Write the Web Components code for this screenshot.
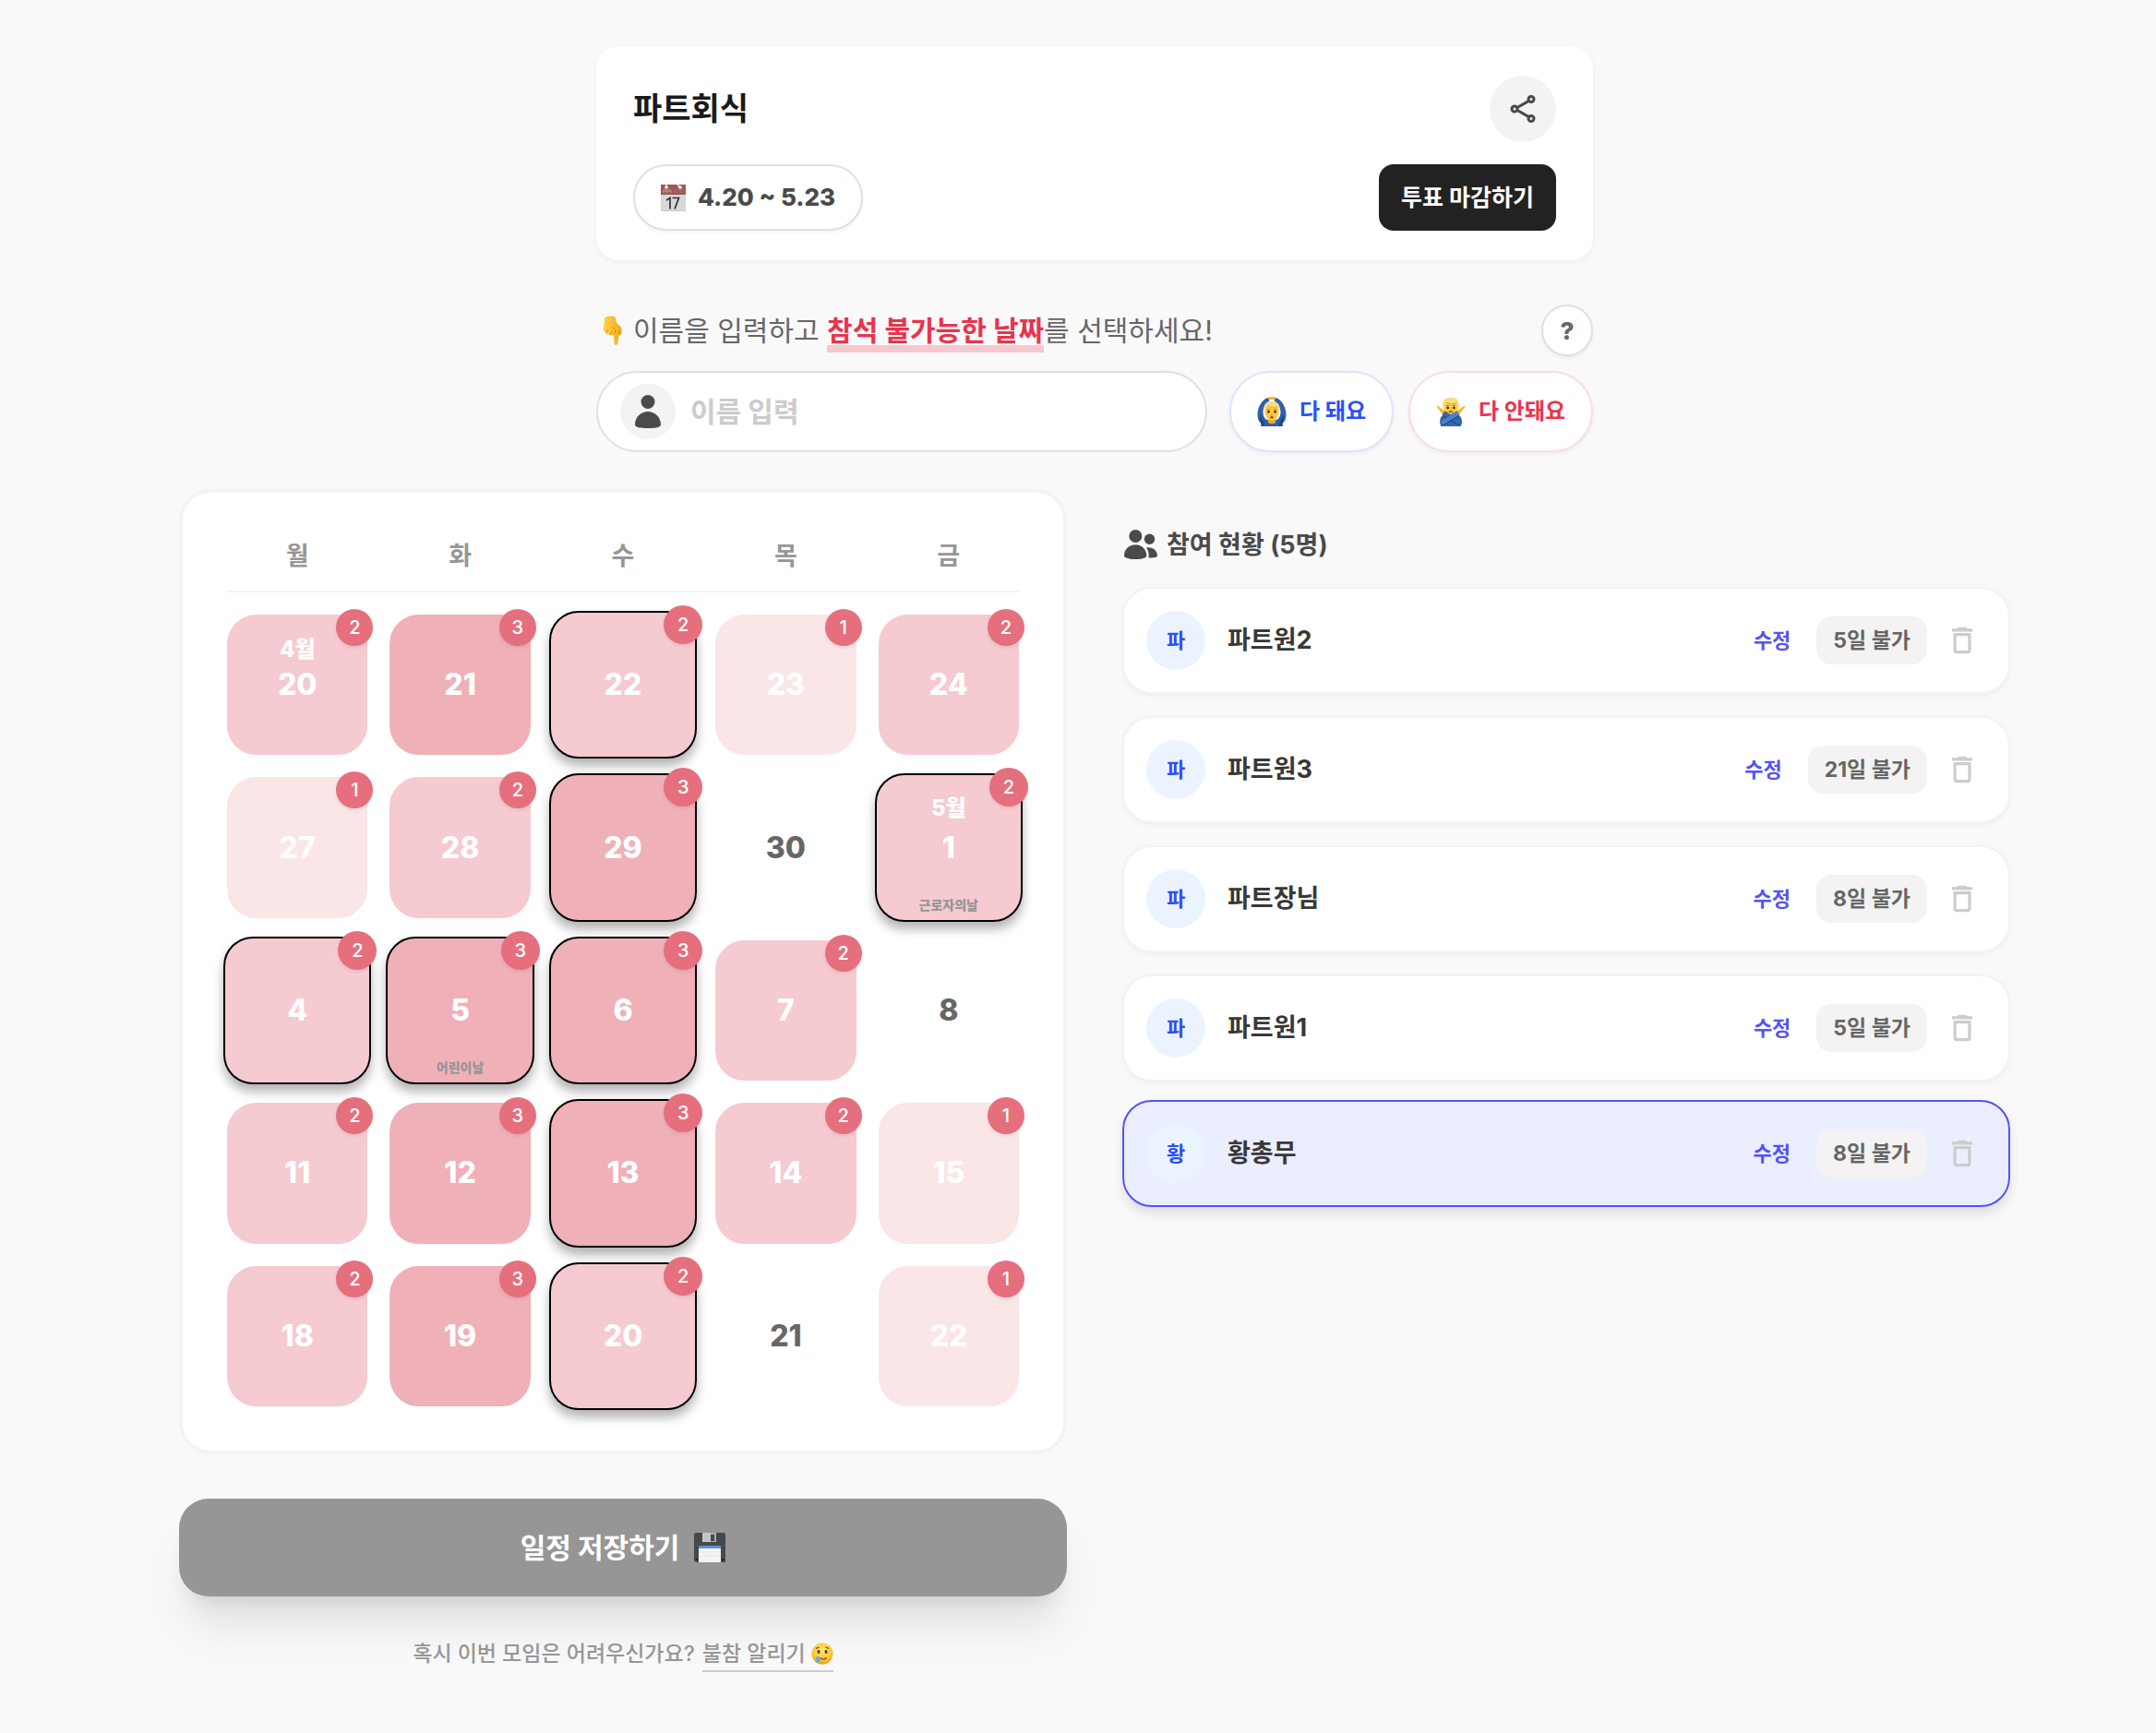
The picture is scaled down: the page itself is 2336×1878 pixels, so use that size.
<!DOCTYPE html>
<html lang="ko">
<head>
<meta charset="utf-8">
<meta name="viewport" content="width=device-width, initial-scale=1">
<title>파트회식</title>
<style>
  body {
    margin: 0;
    background: #f9f9f9;
    font-family: Inter, "Noto Sans CJK KR", sans-serif;
  }
</style>
</head>
<body>
<vote-page></vote-page>

<script>
const ICONS = {
    share: ['0 0 24 24', `
        <g fill="none" stroke="currentColor" stroke-width="2">
          <path d="M8 11l8-4.6M8 13l8 4.6"/>
          <circle cx="6" cy="12" r="2"/><circle cx="18" cy="5" r="2"/><circle cx="18" cy="19" r="2"/>
        </g>`],
    person: ['0 0 36 36', `
        <g fill="currentColor"><circle cx="18" cy="7.5" r="7.5"/>
        <path d="M18 18c8 0 14 6.500 14 14 0 1.300-.6 2-1.800 2.400C26.500 36.500 9.500 36.500 5.800 34.400 4.600 34 4 33.300 4 32c0-7.500 6-14 14-14z"/></g>`],
    people: ['0 0 36 36', `
        <g fill="currentColor"><circle cx="12.300" cy="8" r="7"/><circle cx="27.500" cy="11.300" r="5.700"/>
        <path d="M12.300 17.300c7 0 12 5.200 12 12 0 1-.5 1.600-1.400 1.900-5 2.500-16 2.500-21.200 0C.6 30.900 0 30.300 0 29.300c0-6.800 5.200-12 12.300-12z"/>
        <path d="M24 20.600c6.500-1.500 12 3.100 12 8.400 0 2-3.500 2.600-9.500 2.600.7-4.200-.2-7.800-2.500-11z"/></g>`],
    trash: ['0 0 24 24', `
        <path fill="currentColor" d="M6 19c0 1.100.9 2 2 2h8c1.100 0 2-.9 2-2V7H6v12zM8 9h8v10H8V9zm7.500-5l-1-1h-5l-1 1H5v2h14V4h-3.500z"/>`],
    calendar: ['0 0 28 30', `
        <path fill="#d8d8d8" d="M0 10h27v20H0z"/><path fill="#9b5a57" d="M0 1h27v11H0z"/>
        <path fill="#c9c9c9" d="M0 29h27v1H0z"/>
        <circle cx="6" cy="4" r="1.800" fill="#fff"/><circle cx="21" cy="4" r="1.800" fill="#fff"/>
        <path d="M6 4V0M21 4l-3-3" stroke="#fff" stroke-width="1.200"/>
        <path d="M14 8h11" stroke="#a0625f" stroke-width="4"/>
        <path d="M2 9h1.500V6M5.500 6v3H8V6M10 6v3h2" fill="none" stroke="#d9b5b3" stroke-width=".8"/>
        <path d="M6 18l4-2.500v12M12.500 15.500h7l-4.500 12" fill="none" stroke="#333" stroke-width="1.700"/>`],
    point: ['0 0 22 32', `
        <defs><linearGradient id="g" x2="1"><stop stop-color="#ffd54a"/><stop offset="1" stop-color="#f2a81d"/></linearGradient></defs>
        <path fill="url(#g)" d="M2 3C3 0 13-.5 14 2c.3 3 .5 5 2.500 7.500C20 12 21 14 20.500 17c0 3-1 4.500-3 4.500-.3 2-.8 6-1.200 8.500-.3 2.500-3.600 2.500-3.800 0L12 20.500c-2 1.700-4 1.200-5-.3-2 .6-3.600-.4-4.200-2.200C1 17.500.3 15.500.8 13c.2-4 1.700-6.500 1.200-10z"/>
        <path fill="none" stroke="#d88913" stroke-width="1" d="M3 18c1.500 0 2.500-1 2.600-3M7 20c1.800-.3 2.700-1.500 2.800-3.500M12 20.500c1.500-1 2-2.500 1.500-5l-3-3.500M17.500 21c1-1.500 1-3 .5-4.500"/>`],
    ok: ['0 0 32 32', `
        <path fill="none" stroke="#f0ae2a" stroke-width="2.600" stroke-linecap="round" d="M11.500 3.200C13 .8 19 .8 20.500 3.200"/>
        <path fill="#2e5fa8" d="M11.500 1C5 3 .5 12 .5 19c0 5 1.500 8 4 10v3h23v-3c2.500-2 4-5 4-10 0-7-4.500-16-11-18l-2 3.500C23.500 7 25 11 25.500 16c0 5-2 8-4.500 9H11c-2.500-1-4.500-4-4.500-9 .5-5 2-9 7-11.500z"/>
        <path fill="#22477f" d="M4.500 29C3 26 3 22 4 19c.5 4 2 7 4 9v4H4.500zM27.500 29c1.500-3 1.500-7 .5-10-.5 4-2 7-4 9v4h3.500z"/>
        <path fill="#e9a92b" d="M12 24h8v4q-4 2.500-8 0z"/>
        <path fill="#fbc93f" d="M8.300 14c0-6 3.200-8.500 7.700-8.500s7.700 2.500 7.700 8.500c0 7-3 12-7.700 12s-7.700-5-7.700-12z"/>
        <path fill="#f8dc85" d="M7.800 14.500C7 8 10 5 16 5s9 3 8.200 9.500c-1-1-1.600-2.300-1.900-3.800-3 .8-8 .6-11.200-.9-.8 2-1.800 3.600-3.300 4.700z"/>
        <path fill="none" stroke="#dba43a" stroke-width=".8" d="M11 10c3.200 1.600 8.200 1.700 11.300.8"/>
        <path d="M11 13.800h2.800M18.200 13.800H21" stroke="#9a6818" stroke-width=".9"/>
        <circle cx="12.500" cy="16.300" r="1.300" fill="#37241a"/><circle cx="19.500" cy="16.300" r="1.300" fill="#37241a"/>
        <path d="M14.800 19.300q1.200.8 2.400 0" fill="none" stroke="#cf8b1d"/><ellipse cx="16" cy="22.300" rx="1.900" ry="1" fill="#6b3517"/>`],
    no: ['0 0 32 32', `
        <path fill="#f5b52d" d="M.5 10.500q.5-1.500 2-.3L10 16l-2.500 4zM31.500 10.500q-.5-1.500-2-.3L22 16l2.500 4z"/>
        <path fill="#3365b0" d="M5 22c2.500-3.500 19.500-3.500 22 0l1 5-1 5H5l-1-5z"/>
        <ellipse cx="16" cy="10.500" rx="8" ry="9" fill="#fbc93f"/>
        <path fill="#f8dc85" d="M7.600 11C6 4 9.500.5 16 .5S26 4 24.400 11c-1-1-1.500-2.500-1.900-4.200-3.500.9-8.500.6-11.500-.9-.8 2.200-1.800 3.800-3.400 5.100z"/>
        <path fill="none" stroke="#dba43a" stroke-width=".9" d="M11 6c3.200 1.700 8 1.900 11.400 1"/>
        <path d="M11.300 9.600h2.600M18.100 9.600h2.600" stroke="#9a6818" stroke-width=".9"/>
        <circle cx="12.700" cy="12" r="1.300" fill="#37241a"/><circle cx="19.300" cy="12" r="1.300" fill="#37241a"/>
        <path d="M14 16.500q2-1.300 4 0" stroke="#6b3517" stroke-width="1.200" fill="none"/>
        <path d="M8 18l18 11" stroke="#22477f" stroke-width="6"/><path d="M8 17.500l18 11" stroke="#3567b3" stroke-width="4.800"/>
        <path d="M24 18L6 29" stroke="#22477f" stroke-width="6"/><path d="M24 17.500l-18 11" stroke="#4a80cc" stroke-width="4.800"/>`],
    floppy: ['0 0 34 32', `
        <path fill="#46484c" d="M0 2q0-2 2-2h30q2 0 2 2v30H2l-2-2z"/>
        <path fill="#a9abae" d="M9 0h15v10H9z"/><path fill="#c4c5c8" d="M9 0h9v10H9z"/><path fill="#46484c" d="M18 2h4v7h-4z"/>
        <path fill="#f4f4f5" d="M5 14h24v18H5z"/><path fill="#5d8fd0" d="M5 14h24v3H5z"/>
        <path stroke="#e4e4e7" d="M5 21h24M5 25h24"/><path fill="#232427" d="M1.500 28H4v2H1.500zM30 28h2.500v2H30z"/>`],
    tear: ['0 0 24 24', `
        <defs><radialGradient id="f" cx=".5" cy=".35" r=".65"><stop stop-color="#ffe96a"/><stop offset=".7" stop-color="#fbc635"/><stop offset="1" stop-color="#e99a1b"/></radialGradient></defs>
        <circle cx="12" cy="12" r="11.500" fill="url(#f)"/>
        <ellipse cx="8" cy="10" rx="1.500" ry="2.100" fill="#5c3a12"/><ellipse cx="16" cy="10" rx="1.500" ry="2.100" fill="#5c3a12"/>
        <path d="M5 6.500l3.500-1.500M19 6.500L15.500 5M9.500 16.500c2 1.800 5 1.800 7 0" fill="none" stroke="#6b4413" stroke-width="1.300"/>
        <path fill="#4fa9ee" d="M7 14c1.500 2.500 2.500 3.700 2.500 5.200 0 3.200-5 3.200-5 0 0-1.500 1-2.700 2.500-5.200z"/>
        <path fill="#bfe2fb" d="M6.700 17c-1.200 1.500-1.200 2.300-.5 3z"/>`]
};

class UiIcon extends HTMLElement {
    constructor() {
        super();
        const [box, body] = ICONS[this.getAttribute('name')];
        this.attachShadow({ mode: 'open' }).innerHTML = `
          <style>
            :host { display: inline-flex; flex: none; width: 32px; height: 32px; }
            svg { width: 100%; height: 100%; display: block; }
          </style>
          <svg viewBox="${box}" aria-hidden="true">${body}</svg>
        `;
    }
}

class VoteHeader extends HTMLElement {
    constructor() {
        super();
        this.attachShadow({ mode: 'open' }).innerHTML = `
          <style>
            :host {
              display: flex;
              flex-direction: column;
              gap: 24px;
              padding: 32px 40px;
              background: #fff;
              border-radius: 24px;
              box-shadow: 0 2px 6px rgba(0, 0, 0, .05);
            }
            .row { display: flex; align-items: center; justify-content: space-between; }
            h1 { margin: 0; font-size: 34px; line-height: 52px; font-weight: 700; color: #1a1a1a; }
            button { border: 0; padding: 0; font: inherit; cursor: pointer; }
            .share {
              display: grid;
              place-items: center;
              width: 72px;
              height: 72px;
              border-radius: 50%;
              background: #f3f3f3;
              color: #4a4a4a;
            }
            .share ui-icon { width: 36px; height: 36px; }
            .period {
              display: flex;
              align-items: center;
              gap: 12px;
              height: 72px;
              padding: 0 28px;
              box-sizing: border-box;
              border: 2px solid #e0e0e0;
              border-radius: 36px;
              box-shadow: 0 2px 4px rgba(0, 0, 0, .06);
              background: #fff;
              font-size: 26px;
              line-height: 40px;
              font-weight: 800;
              color: #4a4a4a;
            }
            .period ui-icon { width: 28px; height: 30px; }
            .close {
              padding: 0 24px;
              border-radius: 16px;
              background: #222;
              color: #fff;
              font-size: 25px;
              line-height: 72px;
              font-weight: 700;
            }
          </style>
          <div class="row">
            <h1><slot></slot></h1>
            <button class="share" aria-label="공유"><ui-icon name="share"></ui-icon></button>
          </div>
          <div class="row">
            <button class="period"><ui-icon name="calendar"></ui-icon><slot name="period"></slot></button>
            <button class="close">투표 마감하기</button>
          </div>
        `;
    }
}

class NameForm extends HTMLElement {
    constructor() {
        super();
        this.attachShadow({ mode: 'open' }).innerHTML = `
          <style>
            :host { display: flex; flex-direction: column; gap: 16px; }
            .row { display: flex; align-items: center; gap: 16px; }
            .guide { justify-content: space-between; }
            label { display: flex; align-items: center; gap: 10px; font-size: 30px; line-height: 48px; color: #666; }
            label ui-icon { width: 24px; margin-left: 6px; }
            strong { color: #e8344e; font-weight: 700; box-shadow: 0 8px #f6c8ce; line-height: 32px; display: inline-block; }
            button { font: inherit; font-weight: 700; cursor: pointer; background: #fff; box-sizing: border-box; box-shadow: 0 2px 4px rgba(0, 0, 0, .06); }
            .help { width: 56px; height: 56px; padding: 0; border: 2px solid #e0e0e0; border-radius: 50%; font-size: 26px; font-weight: 800; color: #666; }
            .field {
              display: flex;
              flex: 1;
              align-items: center;
              gap: 16px;
              height: 88px;
              margin-right: 8px;
              padding: 0 24px;
              box-sizing: border-box;
              border: 2px solid #e0e0e0;
              border-radius: 44px;
              background: #fff;
            }
            .avatar { display: grid; place-items: center; width: 60px; height: 60px; border-radius: 50%; background: #f3f3f3; color: #4a4a4a; }
            .avatar ui-icon { width: 36px; height: 36px; }
            input { flex: 1; min-width: 0; padding: 0; border: 0; outline: 0; background: none; font: inherit; font-size: 30px; font-weight: 700; color: #333; }
            input::placeholder { color: #ccc; }
            .all { display: flex; align-items: center; gap: 14px; height: 88px; padding: 0 28px; border-radius: 44px; font-size: 24px; line-height: 36px; }
            .ok { border: 2px solid #d9e5ff; color: #2950f5; }
            .no { border: 2px solid #fadde0; color: #e8344e; }
          </style>
          <div class="row guide">
            <label for="name"><ui-icon name="point"></ui-icon><span>이름을 입력하고 <strong>참석 불가능한 날짜</strong>를 선택하세요!</span></label>
            <button class="help">?</button>
          </div>
          <div class="row">
            <div class="field">
              <span class="avatar"><ui-icon name="person"></ui-icon></span>
              <input id="name" type="text" placeholder="이름 입력">
            </div>
            <button class="all ok"><ui-icon name="ok"></ui-icon>다 돼요</button>
            <button class="all no"><ui-icon name="no"></ui-icon>다 안돼요</button>
          </div>
        `;
    }
}

class CalDay extends HTMLElement {
    connectedCallback() {
        const count = Number(this.getAttribute('count'));
        const month = this.getAttribute('month');
        const holiday = this.getAttribute('holiday');
        this.attachShadow({ mode: 'open' }).innerHTML = `
          <style>
            :host {
              display: grid;
              grid-template: minmax(0, 1fr) / minmax(0, 1fr);
              aspect-ratio: 1;
              --fill: #fff;
            }
            :host([count="1"]) { --fill: #fae5e7; }
            :host([count="2"]) { --fill: #f5cad0; }
            :host([count="3"]) { --fill: #f0b0b8; }
            button {
              position: relative;
              padding: 0;
              border: 2px solid var(--fill);
              border-radius: 32px;
              background: var(--fill);
              font: inherit;
              font-size: 32px;
              line-height: 48px;
              font-weight: 800;
              color: #fff;
              cursor: pointer;
            }
            :host([count="0"]) button { color: #666; }
            :host([selected]) button {
              margin: -4px;
              border-color: #000;
              box-shadow: 0 8px 12px rgba(0, 0, 0, .3);
            }
            .month, .holiday { position: absolute; left: 0; right: 0; }
            .month { top: 20px; font-size: 24px; line-height: 32px; }
            .holiday { bottom: 6px; font-size: 14px; line-height: 20px; color: #969696; }
            .badge {
              position: absolute;
              top: -8px;
              right: -8px;
              width: 40px;
              border-radius: 50%;
              background: #e66f7e;
              box-shadow: 0 2px 4px rgba(0, 0, 0, .08);
              font-size: 20px;
              line-height: 40px;
              font-weight: 500;
            }
            :host([selected]) .badge { width: 42px; line-height: 42px; }
          </style>
          <button>
            ${month ? `<span class="month">${month}</span>` : ''}
            <slot></slot>
            ${holiday ? `<span class="holiday">${holiday}</span>` : ''}
            ${count ? `<span class="badge">${count}</span>` : ''}
          </button>
        `;
    }
}

const DAYS = [
    [20, 2, '', '4월'], [21, 3], [22, 2, 'selected'], [23, 1], [24, 2],
    [27, 1], [28, 2], [29, 3, 'selected'], [30, 0], [1, 2, 'selected', '5월', '근로자의날'],
    [4, 2, 'selected'], [5, 3, 'selected', '', '어린이날'], [6, 3, 'selected'], [7, 2], [8, 0],
    [11, 2], [12, 3], [13, 3, 'selected'], [14, 2], [15, 1],
    [18, 2], [19, 3], [20, 2, 'selected'], [21, 0], [22, 1]
];

class VoteCalendar extends HTMLElement {
    constructor() {
        super();
        this.attachShadow({ mode: 'open' }).innerHTML = `
          <style>
            :host {
              display: block;
              padding: 48px;
              border: 4px solid #f3f3f3;
              border-radius: 34px;
              background: #fff;
            }
            .grid { display: grid; grid-template-columns: repeat(5, minmax(0, 1fr)); gap: 24px; }
            .week {
              margin-bottom: 24px;
              padding-bottom: 16px;
              border-bottom: 2px solid #f3f3f3;
              font-size: 27px;
              line-height: 42px;
              font-weight: 700;
              text-align: center;
              color: #969696;
            }
          </style>
          <div class="grid week">${['월', '화', '수', '목', '금'].map(d => `<span>${d}</span>`).join('')}</div>
          <div class="grid">
            ${DAYS.map(([day, count, selected = '', month = '', holiday = '']) =>
                `<cal-day count="${count}" ${selected} month="${month}" holiday="${holiday}">${day}</cal-day>`).join('')}
          </div>
        `;
    }
}

class MemberCard extends HTMLElement {
    connectedCallback() {
        const name = this.getAttribute('name');
        this.attachShadow({ mode: 'open' }).innerHTML = `
          <style>
            :host {
              display: flex;
              align-items: center;
              gap: 12px;
              padding: 24px;
              border: 2px solid #f3f3f3;
              border-radius: 32px;
              background: #fff;
              box-shadow: 0 2px 6px rgba(0, 0, 0, .05);
              font-weight: 700;
            }
            :host([active]) {
              border-color: #5452f6;
              background: #ebeefe;
              box-shadow: 0 8px 12px rgba(0, 0, 0, .1);
              transform: translateY(-4px);
            }
            .avatar {
              width: 64px;
              border-radius: 50%;
              background: #ebf3ff;
              font-size: 22px;
              line-height: 64px;
              text-align: center;
              color: #2950f5;
            }
            .name { flex: 1; margin-left: 12px; font-size: 27px; line-height: 42px; color: #383838; }
            button { padding: 0; border: 0; background: none; font: inherit; cursor: pointer; }
            .edit { padding: 0 16px; font-size: 22px; line-height: 32px; color: #5452f6; }
            .days { padding: 0 18px; border-radius: 16px; background: #f3f3f3; font-size: 23px; line-height: 52px; color: #666; }
            .remove { display: grid; place-items: center; width: 52px; height: 52px; color: #ccc; }
            .remove ui-icon { width: 38px; height: 38px; }
          </style>
          <span class="avatar">${name[0]}</span>
          <span class="name">${name}</span>
          <button class="edit">수정</button>
          <span class="days">${this.getAttribute('days')}일 불가</span>
          <button class="remove" aria-label="삭제"><ui-icon name="trash"></ui-icon></button>
        `;
    }
}

class MemberList extends HTMLElement {
    constructor() {
        super();
        this.attachShadow({ mode: 'open' }).innerHTML = `
          <style>
            :host { display: flex; flex-direction: column; gap: 24px; padding-top: 40px; }
            h2 {
              display: flex;
              align-items: center;
              gap: 10px;
              margin: 0;
              padding-left: 2px;
              font-size: 27px;
              line-height: 42px;
              font-weight: 700;
              color: #4a4a4a;
            }
            h2 ui-icon { width: 36px; height: 36px; }
          </style>
          <h2><ui-icon name="people"></ui-icon>참여 현황 (5명)</h2>
          <slot></slot>
        `;
    }
}

class VotePage extends HTMLElement {
    constructor() {
        super();
        this.attachShadow({ mode: 'open' }).innerHTML = `
          <style>
            :host { display: block; padding: 50px 32px 64px 68px; }
            .top { display: flex; flex-direction: column; gap: 48px; max-width: 1080px; margin: 0 auto 40px; }
            .columns {
              display: grid;
              grid-template-columns: repeat(2, minmax(0, 1fr));
              gap: 60px;
              align-items: start;
              max-width: 1984px;
              margin: 0 auto;
            }
            .save {
              display: flex;
              align-items: center;
              justify-content: center;
              gap: 16px;
              width: 100%;
              height: 106px;
              margin: 48px 0 44px;
              border: 0;
              border-radius: 32px;
              background: #969696;
              box-shadow: 0 40px 50px -10px rgba(0, 0, 0, .1), 0 16px 20px -12px rgba(0, 0, 0, .1);
              font: inherit;
              font-size: 30px;
              line-height: 48px;
              font-weight: 700;
              color: #fff;
              cursor: pointer;
            }
            .save ui-icon { width: 34px; }
            .absent {
              display: flex;
              justify-content: center;
              gap: 8px;
              margin: 0;
              font-size: 23px;
              line-height: 36px;
              font-weight: 500;
              color: #969696;
            }
            a { display: flex; align-items: center; gap: 6px; border-bottom: 2px solid #ccc; color: inherit; text-decoration: none; }
            a ui-icon { width: 24px; height: 24px; }
          </style>
          <div class="top">
            <vote-header>파트회식<span slot="period">4.20 ~ 5.23</span></vote-header>
            <name-form></name-form>
          </div>
          <main class="columns">
            <section>
              <vote-calendar></vote-calendar>
              <button class="save">일정 저장하기<ui-icon name="floppy"></ui-icon></button>
              <p class="absent"><span>혹시 이번 모임은 어려우신가요?</span><a href="#">불참 알리기<ui-icon name="tear"></ui-icon></a></p>
            </section>
            <member-list>
              <member-card name="파트원2" days="5"></member-card>
              <member-card name="파트원3" days="21"></member-card>
              <member-card name="파트장님" days="8"></member-card>
              <member-card name="파트원1" days="5"></member-card>
              <member-card name="황총무" days="8" active></member-card>
            </member-list>
          </main>
        `;
    }
}

window.customElements.define('ui-icon', UiIcon);
window.customElements.define('vote-header', VoteHeader);
window.customElements.define('name-form', NameForm);
window.customElements.define('cal-day', CalDay);
window.customElements.define('vote-calendar', VoteCalendar);
window.customElements.define('member-card', MemberCard);
window.customElements.define('member-list', MemberList);
window.customElements.define('vote-page', VotePage);
</script>
</body>
</html>
